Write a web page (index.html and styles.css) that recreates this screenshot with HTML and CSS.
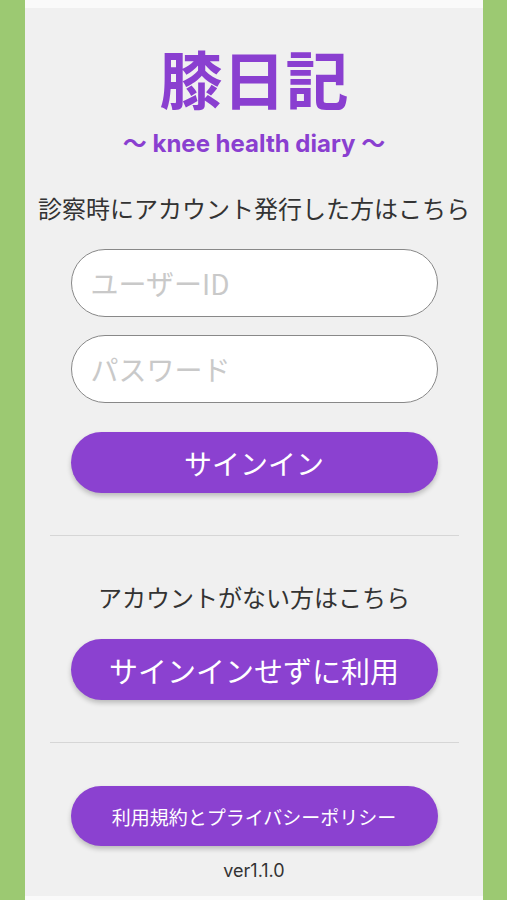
FILE: index.html
```html
<!doctype html>
<html lang="ja">
    <head>
        <meta charset="UTF-8" />
        <meta name="viewport" content="width=device-width, initial-scale=1.0" />
        <title>膝日記</title>
        <link rel="stylesheet" href="styles.css">
    </head>
    <body>
        <div class="screen">
            <div class="panel">
                <h1 class="title">膝日記</h1>
                <p class="subtitle">〜 knee health diary 〜</p>

                <p class="lead">診察時にアカウント発行した方はこちら</p>
                <form class="login-form">
                    <input type="text" class="field" placeholder="ユーザーID" />
                    <input type="password" class="field" placeholder="パスワード" />
                    <button type="submit" class="btn btn-signin">サインイン</button>
                </form>

                <hr class="divider" />

                <p class="lead lead-guest">アカウントがない方はこちら</p>
                <button type="button" class="btn btn-guest">サインインせずに利用</button>

                <hr class="divider" />

                <button type="button" class="btn btn-terms">利用規約とプライバシーポリシー</button>
                <p class="version">ver1.1.0</p>
            </div>
        </div>
    </body>
</html>
```

FILE: styles.css
```css
body {
    margin: 0;
    padding: 0;
    background-color: #9cc972;
    font-family: Inter, "Noto Sans CJK JP", sans-serif;
    color: #333;
}
.screen {
    width: 458px;
    margin-left: 25px;
    height: 900px;
    background-color: #fafafa;
    padding-top: 8px;
    box-sizing: border-box;
}
.panel {
    height: 888px;
    background-color: #f0f0f0;
    display: flex;
    flex-direction: column;
    align-items: center;
}
.title {
    margin: 37px 0 0;
    font-family: "Noto Sans CJK JP", sans-serif;
    font-size: 63px;
    line-height: 63px;
    font-weight: 700;
    color: #8a3fd0;
}
.subtitle {
    margin: 21px 0 0;
    font-size: 24px;
    line-height: 30px;
    font-weight: 700;
    color: #8a3fd0;
}
.lead {
    margin: 33px 0 0;
    font-family: "Noto Sans CJK JP", sans-serif;
    font-size: 24px;
    line-height: 32px;
    color: #333;
}
.lead-guest {
    margin-top: 45px;
}
.login-form {
    display: flex;
    flex-direction: column;
    align-items: center;
}
.field {
    box-sizing: border-box;
    width: 367px;
    height: 68px;
    margin-top: 25px;
    padding: 0 19px;
    border: 1.5px solid #888;
    border-radius: 34px;
    background-color: #fff;
    font-family: "Noto Sans CJK JP", sans-serif;
    font-size: 28px;
    outline: none;
}
.field + .field {
    margin-top: 18px;
}
.field::placeholder {
    color: #c9c9c9;
}
.btn {
    width: 367px;
    height: 61px;
    border: none;
    border-radius: 31px;
    background-color: #8b41d0;
    color: #fff;
    font-family: "Noto Sans CJK JP", sans-serif;
    font-size: 28px;
    cursor: pointer;
    box-shadow: 0 3px 5px rgba(0, 0, 0, 0.22);
}
.btn-signin {
    margin-top: 29px;
}
.btn-guest {
    margin-top: 26px;
    font-size: 29px;
}
.btn-terms {
    margin-top: 43px;
    height: 60px;
    font-size: 19px;
}
.divider {
    width: 409px;
    margin: 42px 0 0;
    border: none;
    border-top: 1px solid #d6d6d6;
}
.version {
    margin: 13px 0 0;
    font-size: 18px;
    line-height: 24px;
    color: #333;
}
```
